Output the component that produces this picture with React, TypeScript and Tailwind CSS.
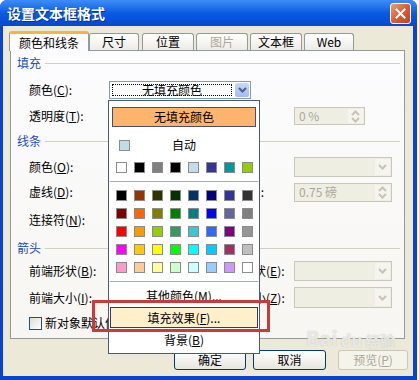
import React from "react";

const recent = ["#FFFFFF", "#000000", "#808080", "#000000", "#BEDFE7", "#333399", "#009999", "#99CC00"];
const palette = [
  ["#000000", "#993300", "#333300", "#003300", "#003366", "#000080", "#333399", "#333333"],
  ["#800000", "#FF6600", "#808000", "#008000", "#008080", "#0000FF", "#666699", "#808080"],
  ["#FF0000", "#FF9900", "#99CC00", "#339966", "#33CCCC", "#3366FF", "#800080", "#969696"],
  ["#FF00FF", "#FFCC00", "#FFFF00", "#00FF00", "#00FFFF", "#00CCFF", "#993366", "#C0C0C0"],
  ["#FF99CC", "#FFCC99", "#FFFF99", "#CCFFCC", "#CCFFFF", "#99CCFF", "#CC99FF", "#FFFFFF"],
];

function Swatch({ color }: { color: string }) {
  return <div className="h-[11px] w-[11px] shrink-0 border border-[#8C8C8C]" style={{ backgroundColor: color }} />;
}

function Chevron({ color, up = false }: { color: string; up?: boolean }) {
  return (
    <svg width="9" height="6" viewBox="0 0 9 6">
      <path d={up ? "M1 5 L4.5 1.5 L8 5" : "M1 1 L4.5 4.5 L8 1"} fill="none" stroke={color} strokeWidth="2" />
    </svg>
  );
}

function Label({ text, k, tail = ":" }: { text: string; k: string; tail?: string }) {
  return (
    <span className="whitespace-nowrap">
      {text}(<span className="underline">{k}</span>){tail}
    </span>
  );
}

function DisabledCombo({ h }: { h: string }) {
  return (
    <div className={`flex w-[98px] border border-[#C9C7BA] bg-[#EFEEE3] ${h}`}>
      <div className="flex-1" />
      <div className="m-[1px] flex w-[15px] items-center justify-center bg-[#F5F4EE]">
        <Chevron color="#C6C4B8" />
      </div>
    </div>
  );
}

function DisabledSpin({ w, h, text }: { w: string; h: string; text: string }) {
  return (
    <div className={`flex border border-[#C9C7BA] bg-[#EFEEE3] ${w} ${h}`}>
      <div className="flex flex-1 items-center pl-[4px] text-[#ACA899]">{text}</div>
      <div className="m-[1px] flex w-[15px] flex-col items-center justify-center gap-[1px] bg-[#F5F4EE]">
        <Chevron color="#C6C4B8" up />
        <Chevron color="#C6C4B8" />
      </div>
    </div>
  );
}

function Header({ title }: { title: string }) {
  return (
    <div className="flex h-[14px] items-center pl-[6px] pr-[4px]">
      <span className="text-[#1A4FB8]">{title}</span>
      <div className="ml-[4px] h-px flex-1 bg-[#D0D0BF]" />
    </div>
  );
}

function Tab({ label, active = false, disabled = false, w, ml }: { label: string; active?: boolean; disabled?: boolean; w: string; ml: string }) {
  if (active) {
    return (
      <div className={`relative z-10 flex h-[20px] items-center justify-center rounded-t-[3px] border border-b-0 border-[#919B9C] border-t-[3px] border-t-[#F7B43E] bg-[#FCFCFE] ${w} ${ml}`}>
        {label}
      </div>
    );
  }
  return (
    <div className={`mb-[1px] flex h-[17px] items-center justify-center rounded-t-[3px] border border-b-0 border-[#919B9C] bg-linear-to-b from-white to-[#ECEBE6] ${w} ${ml} ${disabled ? "text-[#ACA899]" : ""}`}>
      {label}
    </div>
  );
}

export default function App() {
  return (
    <div className="relative h-[380px] w-[419px] overflow-hidden bg-white font-['Noto_Sans_CJK_SC','Liberation_Sans',sans-serif] text-[12px] leading-none text-black">
      <div className="flex h-[380px] w-[417px] flex-col overflow-hidden rounded-t-[7px] bg-[#0B44CC]">
        {/* title bar */}
        <div className="flex h-[26px] shrink-0 items-center justify-between bg-linear-to-b from-[#3D8DF6] via-[#0A5BE4] to-[#0449CF] pl-[7px] pr-[6px]">
          <span className="text-[14px] font-bold text-white [text-shadow:1px_1px_0_#0A2E8C]">设置文本框格式</span>
          <div className="flex h-[21px] w-[21px] items-center justify-center rounded-[3px] border border-white bg-linear-to-br from-[#E99B80] via-[#DD5B37] to-[#C2411E]">
            <svg width="11" height="11" viewBox="0 0 11 11">
              <path d="M1.5 1.5 L9.5 9.5 M9.5 1.5 L1.5 9.5" stroke="white" strokeWidth="2" strokeLinecap="square" />
            </svg>
          </div>
        </div>

        {/* body */}
        <div className="mb-[4px] ml-[3px] mr-[4px] flex flex-1 flex-col bg-[#ECE9D8] pl-[7px] pt-[5px]">
          {/* tabs */}
          <div className="-mb-[1px] -ml-[1px] flex h-[20px] items-end">
            <Tab label="颜色和线条" active w="w-[80px]" ml="ml-0" />
            <Tab label="尺寸" w="w-[50px]" ml="ml-0" />
            <Tab label="位置" w="w-[52px]" ml="ml-[3px]" />
            <Tab label="图片" disabled w="w-[52px]" ml="ml-[2px]" />
            <Tab label="文本框" w="w-[52px]" ml="ml-[2px]" />
            <Tab label="Web" w="w-[50px]" ml="ml-[2px]" />
          </div>

          {/* panel */}
          <div className="flex h-[289px] w-[395px] flex-col border border-[#919B9C] bg-linear-to-b from-[#FCFCFE] to-[#F7F6F2] pt-[5px]">
            <Header title="填充" />
            <div className="mt-[7px] flex h-[26px] items-center pl-[18px]">
              <div className="w-[80px]"><Label text="颜色" k="C" /></div>
              <div className="flex h-[18px] w-[142px] border border-[#7F9DB9] bg-white p-[1px]">
                <div className="m-[1px] flex flex-1 items-center justify-center border border-dotted border-black">无填充颜色</div>
                <div className="ml-[2px] flex w-[14px] items-center justify-center rounded-[2px] bg-linear-to-b from-[#C8D7FC] to-[#A3BCF3]">
                  <Chevron color="#4D6185" />
                </div>
              </div>
            </div>
            <div className="flex h-[26px] items-center pl-[18px]">
              <div className="w-[265px]"><Label text="透明度" k="T" /></div>
              <DisabledSpin w="w-[71px]" h="h-[18px]" text="0 %" />
            </div>

            <div className="mt-[5px]"><Header title="线条" /></div>
            <div className="mt-[6px] flex h-[25px] items-center pl-[18px]">
              <div className="w-[189px]"><Label text="颜色" k="O" /></div>
              <div className="w-[76px]"><Label text="样式" k="S" /></div>
              <DisabledCombo h="h-[20px]" />
            </div>
            <div className="flex h-[26px] items-center pl-[18px]">
              <div className="w-[189px]"><Label text="虚线" k="D" /></div>
              <div className="w-[76px]"><Label text="粗细" k="W" /></div>
              <DisabledSpin w="w-[98px]" h="h-[19px]" text="0.75 磅" />
            </div>
            <div className="mt-[2px] flex h-[26px] items-center pl-[18px]">
              <Label text="连接符" k="N" />
            </div>

            <div className="mt-[8px]"><Header title="箭头" /></div>
            <div className="mt-[3px] flex h-[26px] items-center pl-[18px]">
              <div className="w-[189px]"><Label text="前端形状" k="B" /></div>
              <div className="w-[76px]"><Label text="后端形状" k="E" /></div>
              <DisabledCombo h="h-[20px]" />
            </div>
            <div className="mt-[1px] flex h-[25px] items-center pl-[18px]">
              <div className="w-[189px]"><Label text="前端大小" k="I" /></div>
              <div className="w-[76px]"><Label text="后端大小" k="Z" /></div>
              <DisabledCombo h="h-[21px]" />
            </div>
            <div className="flex h-[26px] items-center pl-[18px]">
              <div className="h-[13px] w-[13px] border border-[#1C5180] bg-linear-to-br from-[#DCDCD7] to-white" />
              <span className="ml-[3px]"><Label text="新对象默认值" k="F" tail="" /></span>
            </div>
          </div>

          {/* buttons */}
          <div className="mt-[11px] flex h-[20px]">
            <button className="ml-[164px] w-[72px] rounded-[3px] border border-[#003C74] bg-linear-to-b from-white to-[#E6E5DE]">确定</button>
            <button className="ml-[7px] w-[73px] rounded-[3px] border border-[#003C74] bg-linear-to-b from-white to-[#E6E5DE]">取消</button>
            <button className="ml-[12px] w-[70px] rounded-[3px] border border-[#C9C7BA] bg-[#F5F4EA] text-[#ACA899]">
              预览(<span className="underline">P</span>)
            </button>
          </div>
        </div>
      </div>

      {/* colour dropdown */}
      <div className="absolute left-[108px] top-[100px] flex h-[254px] w-[152px] flex-col border border-[#4D5A73] bg-white">
        <div className="mx-[3px] mt-[6px] flex h-[20px] items-center justify-center border border-[#4B4B6B] bg-[#FDB46C]">无填充颜色</div>
        <div className="mt-[8px] flex h-[20px] items-center pl-[10px]">
          <Swatch color="#BEDDE6" />
          <span className="flex-1 pr-[21px] text-center">自动</span>
        </div>
        <div className="mt-[7px] flex gap-[7px] pl-[7px]">
          {recent.map((c, i) => <Swatch key={i} color={c} />)}
        </div>
        <div className="mx-[1px] mt-[8px] h-px bg-[#A6AEBD]" />
        <div className="mt-[8px] flex flex-col gap-[7px] pl-[7px]">
          {palette.map((row, r) => (
            <div key={r} className="flex gap-[7px]">
              {row.map((c, i) => <Swatch key={i} color={c} />)}
            </div>
          ))}
        </div>
        <div className="mx-[1px] mt-[8px] h-px bg-[#A6AEBD]" />
        <div className="mt-[4px] flex h-[20px] items-center justify-center">
          其他颜色(<span className="underline">M</span>)...
        </div>
        <div className="mx-[1px] mt-[1px] flex h-[21px] items-center justify-center border border-[#3B3B5C] bg-[#FFEFCB]">
          填充效果(<span className="underline">F</span>)...
        </div>
        <div className="mt-[2px] flex h-[20px] items-center justify-center">
          背景(<span className="underline">B</span>)
        </div>
      </div>

      {/* annotation */}
      <div className="absolute left-[92px] top-[300px] h-[32px] w-[178px] border-[3px] border-[#CB3A3A]" />

      {/* watermark */}
      <div className="absolute left-[306px] top-[328px] flex items-end gap-[3px] text-[20px] font-bold text-white/70 [text-shadow:0_0_1px_#B4B2A6]">
        <span>Bai</span>
        <span className="text-[17px]">du</span>
        <span className="text-[15px]">经验</span>
      </div>
    </div>
  );
}
